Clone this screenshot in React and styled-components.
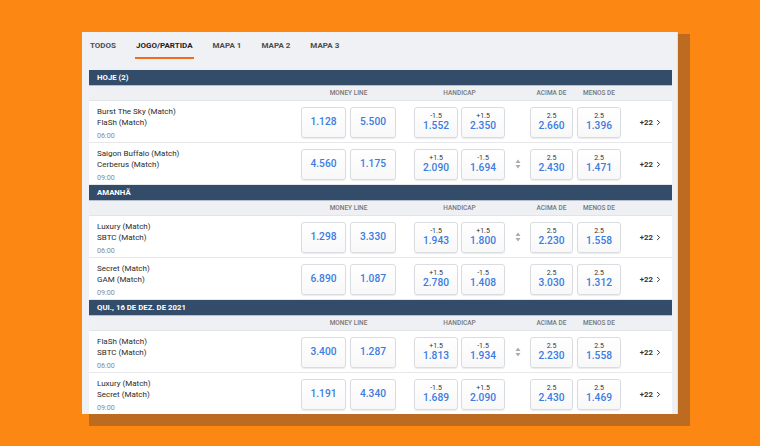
import React from 'react';
import styled, { createGlobalStyle } from 'styled-components';
import { ChevronRight } from 'lucide-react';

const GlobalStyle = createGlobalStyle`
  html, body {
    margin: 0;
    padding: 0;
    background: #fc8713;
    font-family: Roboto, "Liberation Sans", Arial, sans-serif;
  }
`;

const Page = styled.div`
  width: 760px;
  height: 446px;
  padding: 32px 0 0 82px;
  box-sizing: border-box;
  overflow: hidden;
`;

const Frame = styled.div`
  position: relative;
  width: 596px;
  height: 382px;

  &::before {
    content: '';
    position: absolute;
    top: 2px;
    left: 7px;
    right: -12px;
    bottom: -12px;
    background: #bd6b20;
  }
`;

const Panel = styled.div`
  position: relative;
  height: 100%;
  background: #eff1f5;
  border-right: 1px solid #dcdfe5;
  box-sizing: border-box;
  padding: 0 5px 0 7px;
  overflow: hidden;
`;

const Tabs = styled.div`
  display: flex;
  gap: 18px;
  margin-bottom: 11px;
`;

const Tab = styled.div`
  padding: 8px 1px 5px;
  line-height: 12px;
  font-size: 8px;
  font-weight: 700;
  text-transform: uppercase;
  color: ${(p) => (p.$active ? '#222' : '#4d4d4d')};
  border-bottom: 2px solid ${(p) => (p.$active ? '#f26a1b' : 'transparent')};
`;

const Table = styled.div`
  width: 583px;
`;

const SectionBar = styled.div`
  height: 16px;
  line-height: 16px;
  padding-left: 8px;
  background: #334c69;
  border-bottom: 1px solid #b7c0cc;
  box-sizing: border-box;
  color: #fff;
  font-size: 7.8px;
  font-weight: 700;
  text-transform: uppercase;
`;

const Grid = styled.div`
  display: grid;
  grid-template-columns: 1fr 113px 91px 25px 91px 51px;
  align-items: center;
`;

const HeadRow = styled(Grid)`
  height: 15px;
  background: #eef0f4;
  border-bottom: 1px solid #e1e4e9;
  box-sizing: border-box;
`;

const Pair = styled.div`
  display: grid;
  grid-template-columns: ${(p) => p.$cols || '45px 46px'};
  column-gap: ${(p) => p.$gap || '4px'};
  width: ${(p) => p.$width || 'auto'};
`;

const HeadLabel = styled.div`
  text-align: center;
  font-size: 6.5px;
  font-weight: 500;
  color: #777;
  text-transform: uppercase;
  white-space: nowrap;
`;

const MatchRow = styled(Grid)`
  height: 42px;
  background: #fff;
  border-bottom: 1px solid #e6e8ec;
  box-sizing: border-box;
  padding-top: 1px;
`;

const Teams = styled.div`
  padding: 3px 0 0 8px;
  font-size: 8px;
  line-height: 11.5px;
  color: #2b2b2b;
`;

const Time = styled.div`
  color: #8a8a8a;
  font-size: 7.2px;
  margin-top: 1px;
`;

const OddButton = styled.div`
  height: 31px;
  box-sizing: border-box;
  border: 1px solid #d9dce1;
  border-radius: 3px;
  background: linear-gradient(#ffffff, #f8f8f9);
  box-shadow: 0 1px 1px rgba(0, 0, 0, 0.08);
  display: flex;
  flex-direction: column;
  align-items: center;
  justify-content: center;
`;

const Line = styled.div`
  font-size: 7px;
  line-height: 8px;
  color: #333;
`;

const Price = styled.div`
  font-size: 10.2px;
  line-height: 12px;
  font-weight: 500;
  color: #3b7ce0;
`;

const Swap = styled.div`
  display: flex;
  justify-content: center;
`;

const More = styled.div`
  display: flex;
  align-items: center;
  justify-content: flex-end;
  padding-right: 9px;
  gap: 1px;
  font-size: 7.8px;
  font-weight: 700;
  color: #333;
`;

const UpDown = () => (
  <svg width="6" height="10" viewBox="0 0 6 10">
    <path d="M3 0.5 L5.5 4 H0.5 Z" fill="#a9acb2" />
    <path d="M3 9.5 L5.5 6 H0.5 Z" fill="#a9acb2" />
  </svg>
);

const sections = [
  {
    title: 'Hoje (2)',
    matches: [
      { home: 'Burst The Sky (Match)', away: 'FlaSh (Match)', time: '06:00', ml: ['1.128', '5.500'], hc: [['-1.5', '1.552'], ['+1.5', '2.350']], swap: false, ou: ['2.660', '1.396'] },
      { home: 'Saigon Buffalo (Match)', away: 'Cerberus (Match)', time: '09:00', ml: ['4.560', '1.175'], hc: [['+1.5', '2.090'], ['-1.5', '1.694']], swap: true, ou: ['2.430', '1.471'] },
    ],
  },
  {
    title: 'Amanhã',
    matches: [
      { home: 'Luxury (Match)', away: 'SBTC (Match)', time: '06:00', ml: ['1.298', '3.330'], hc: [['-1.5', '1.943'], ['+1.5', '1.800']], swap: true, ou: ['2.230', '1.558'] },
      { home: 'Secret (Match)', away: 'GAM (Match)', time: '09:00', ml: ['6.890', '1.087'], hc: [['+1.5', '2.780'], ['-1.5', '1.408']], swap: false, ou: ['3.030', '1.312'] },
    ],
  },
  {
    title: 'Qui., 16 de dez. de 2021',
    matches: [
      { home: 'FlaSh (Match)', away: 'SBTC (Match)', time: '06:00', ml: ['3.400', '1.287'], hc: [['+1.5', '1.813'], ['-1.5', '1.934']], swap: true, ou: ['2.230', '1.558'] },
      { home: 'Luxury (Match)', away: 'Secret (Match)', time: '09:00', ml: ['1.191', '4.340'], hc: [['-1.5', '1.689'], ['+1.5', '2.090']], swap: false, ou: ['2.430', '1.469'] },
    ],
  },
];

const tabs = ['Todos', 'Jogo/Partida', 'Mapa 1', 'Mapa 2', 'Mapa 3'];

const ColumnHead = () => (
  <HeadRow>
    <div />
    <Pair $cols="95px" $width="95px">
      <HeadLabel>Money Line</HeadLabel>
    </Pair>
    <HeadLabel>Handicap</HeadLabel>
    <div />
    <Pair $cols="43px 44px">
      <HeadLabel>Acima de</HeadLabel>
      <HeadLabel>Menos de</HeadLabel>
    </Pair>
    <div />
  </HeadRow>
);

const Match = ({ m }) => (
  <MatchRow>
    <Teams>
      <div>{m.home}</div>
      <div>{m.away}</div>
      <Time>{m.time}</Time>
    </Teams>
    <Pair>
      {m.ml.map((v, i) => (
        <OddButton key={i}>
          <Price>{v}</Price>
        </OddButton>
      ))}
    </Pair>
    <Pair $cols="44px 44px" $gap="3px">
      {m.hc.map(([line, v], i) => (
        <OddButton key={i}>
          <Line>{line}</Line>
          <Price>{v}</Price>
        </OddButton>
      ))}
    </Pair>
    <Swap>{m.swap && <UpDown />}</Swap>
    <Pair $cols="43px 44px">
      {m.ou.map((v, i) => (
        <OddButton key={i}>
          <Line>2.5</Line>
          <Price>{v}</Price>
        </OddButton>
      ))}
    </Pair>
    <More>
      +22
      <ChevronRight size={9} strokeWidth={2.6} />
    </More>
  </MatchRow>
);

export default function App() {
  return (
    <Page>
      <GlobalStyle />
      <Frame>
        <Panel>
          <Tabs>
            {tabs.map((t, i) => (
              <Tab key={t} $active={i === 1}>{t}</Tab>
            ))}
          </Tabs>
          <Table>
            {sections.map((s) => (
              <React.Fragment key={s.title}>
                <SectionBar>{s.title}</SectionBar>
                <ColumnHead />
                {s.matches.map((m) => (
                  <Match key={m.home + m.time} m={m} />
                ))}
              </React.Fragment>
            ))}
          </Table>
        </Panel>
      </Frame>
    </Page>
  );
}
